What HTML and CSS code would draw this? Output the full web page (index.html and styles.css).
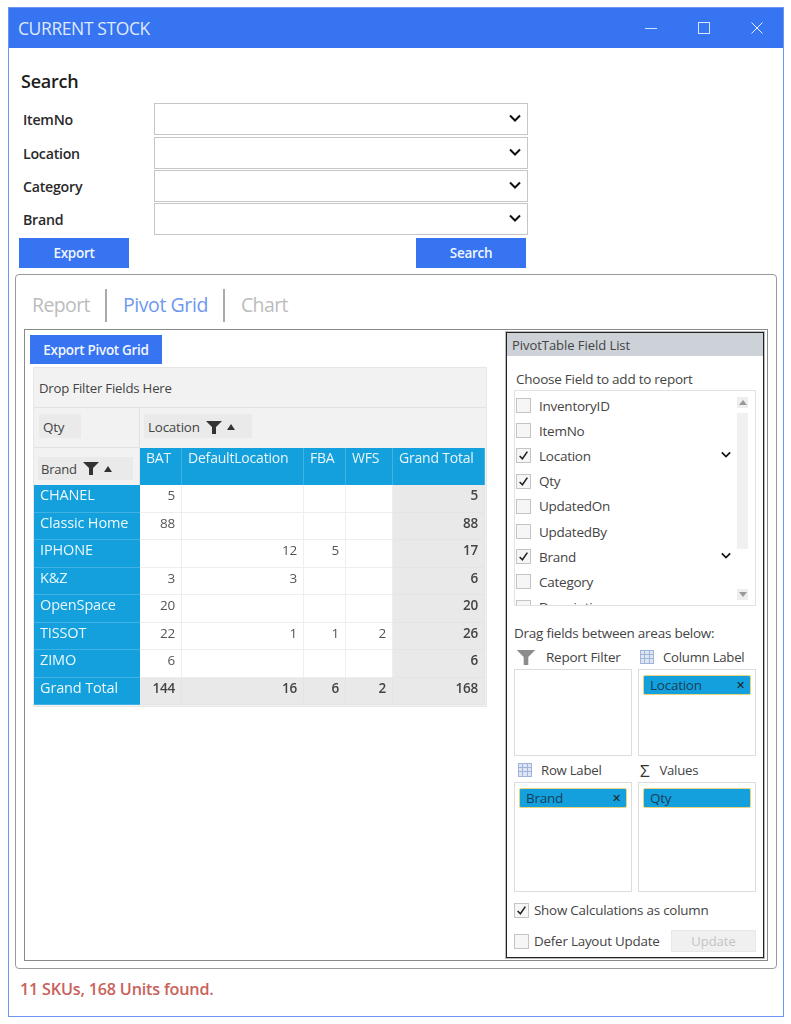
FILE: index.html
```html
<!DOCTYPE html>
<html lang="en">
<head>
<meta charset="utf-8">
<title>Current Stock</title>
<link rel="stylesheet" href="styles.css">
</head>
<body>
<svg width="0" height="0" class="defs">
  <symbol id="chev" viewBox="0 0 12 8"><path d="M1 1.5 6 6.5 11 1.5" fill="none" stroke="#111" stroke-width="2"/></symbol>
  <symbol id="funnel" viewBox="0 0 16 13"><path d="M0 0H16L10 6V13H6V6Z" fill="#333"/></symbol>
  <symbol id="tick" viewBox="0 0 10 10"><path d="M1.5 5.5 4 8 8.5 1.5" fill="none" stroke="#222" stroke-width="1.4"/></symbol>
  <symbol id="gridicon" viewBox="0 0 14 14"><rect width="14" height="14" fill="#dfe6f2"/><path d="M0 .5H14M0 4.5H14M0 8.5H14M0 13.5H14M.5 0V14M4.5 0V14M9.5 0V14M13.5 0V14" stroke="#9db4dc"/></symbol>
</svg>
<div class="window">
  <header class="titlebar">
    <span class="title">CURRENT STOCK</span>
    <div class="winctl">
      <svg width="12" height="12" viewBox="0 0 12 12"><path d="M0 6.5H12" stroke="#cfe0fb"/></svg>
      <svg width="12" height="12" viewBox="0 0 12 12"><rect x=".5" y=".5" width="11" height="11" fill="none" stroke="#dbe7fc"/></svg>
      <svg width="12" height="12" viewBox="0 0 12 12"><path d="M.5 .5 11.5 11.5M11.5 .5 .5 11.5" stroke="#e6effd"/></svg>
    </div>
  </header>

  <section class="search">
    <h2>Search</h2>
    <div class="form">
      <label>ItemNo</label><div class="combo"><svg class="chev"><use href="#chev"/></svg></div>
      <label>Location</label><div class="combo"><svg class="chev"><use href="#chev"/></svg></div>
      <label>Category</label><div class="combo"><svg class="chev"><use href="#chev"/></svg></div>
      <label>Brand</label><div class="combo"><svg class="chev"><use href="#chev"/></svg></div>
    </div>
    <div class="actions">
      <button class="btn">Export</button>
      <button class="btn">Search</button>
    </div>
  </section>

  <section class="tabpanel">
    <nav class="tabs">
      <span class="tab">Report</span>
      <span class="tab active">Pivot Grid</span>
      <span class="tab">Chart</span>
    </nav>
    <div class="workspace">
      <div class="gridside">
        <button class="btn pivotbtn">Export Pivot Grid</button>
        <div class="pivot">
          <div class="dropzone">Drop Filter Fields Here</div>
          <div class="pt">
            <div class="c zone"><span class="chip">Qty</span></div>
            <div class="c zone span5"><span class="chip loc">Location <svg class="fn"><use href="#funnel"/></svg><i class="up"></i></span></div>
            <div class="c zone brandzone"><span class="chip brandchip">Brand <svg class="fn"><use href="#funnel"/></svg><i class="up"></i></span></div>
            <div class="c ch">BAT</div><div class="c ch">DefaultLocation</div><div class="c ch">FBA</div><div class="c ch">WFS</div><div class="c ch">Grand Total</div>

            <div class="c rh">CHANEL</div><div class="c v">5</div><div class="c v"></div><div class="c v"></div><div class="c v"></div><div class="c v t">5</div>
            <div class="c rh">Classic Home</div><div class="c v">88</div><div class="c v"></div><div class="c v"></div><div class="c v"></div><div class="c v t">88</div>
            <div class="c rh">IPHONE</div><div class="c v"></div><div class="c v">12</div><div class="c v">5</div><div class="c v"></div><div class="c v t">17</div>
            <div class="c rh">K&amp;Z</div><div class="c v">3</div><div class="c v">3</div><div class="c v"></div><div class="c v"></div><div class="c v t">6</div>
            <div class="c rh">OpenSpace</div><div class="c v">20</div><div class="c v"></div><div class="c v"></div><div class="c v"></div><div class="c v t">20</div>
            <div class="c rh">TISSOT</div><div class="c v">22</div><div class="c v">1</div><div class="c v">1</div><div class="c v">2</div><div class="c v t">26</div>
            <div class="c rh">ZIMO</div><div class="c v">6</div><div class="c v"></div><div class="c v"></div><div class="c v"></div><div class="c v t">6</div>
            <div class="c rh">Grand Total</div><div class="c v t">144</div><div class="c v t">16</div><div class="c v t">6</div><div class="c v t">2</div><div class="c v t">168</div>
          </div>
        </div>
      </div>

      <aside class="fieldlist">
        <div class="flhead">PivotTable Field List</div>
        <div class="flbody">
          <p class="choose">Choose Field to add to report</p>
          <div class="fields">
            <ul class="items">
              <li><span class="cb"></span>InventoryID</li>
              <li><span class="cb"></span>ItemNo</li>
              <li><span class="cb"><svg><use href="#tick"/></svg></span>Location<svg class="chev small"><use href="#chev"/></svg></li>
              <li><span class="cb"><svg><use href="#tick"/></svg></span>Qty</li>
              <li><span class="cb"></span>UpdatedOn</li>
              <li><span class="cb"></span>UpdatedBy</li>
              <li><span class="cb"><svg><use href="#tick"/></svg></span>Brand<svg class="chev small"><use href="#chev"/></svg></li>
              <li><span class="cb"></span>Category</li>
              <li><span class="cb"></span>Description</li>
            </ul>
            <div class="scroll">
              <span class="sbtn"><i class="up g"></i></span>
              <span class="track"></span>
              <span class="sbtn"><i class="down g"></i></span>
            </div>
          </div>
          <p class="drag">Drag fields between areas below:</p>
          <div class="areas">
            <div class="area">
              <div class="ah first"><svg width="22" height="15" viewBox="0 0 16 13"><path d="M0 0H16L10 6V13H6V6Z" fill="#8c8c8c"/></svg>Report Filter</div>
              <div class="abox tall1"></div>
            </div>
            <div class="area">
              <div class="ah"><svg width="14" height="14"><use href="#gridicon"/></svg>Column Label</div>
              <div class="abox tall1"><div class="pill">Location<span class="x">✕</span></div></div>
            </div>
            <div class="area">
              <div class="ah left"><svg width="14" height="14"><use href="#gridicon"/></svg>Row Label</div>
              <div class="abox tall2"><div class="pill">Brand<span class="x">✕</span></div></div>
            </div>
            <div class="area">
              <div class="ah sigma"><b>Σ</b>Values</div>
              <div class="abox tall2"><div class="pill">Qty</div></div>
            </div>
          </div>
          <div class="opt"><span class="cb"><svg><use href="#tick"/></svg></span>Show Calculations as column</div>
          <div class="opt last"><span class="cb"></span>Defer Layout Update<button class="update">Update</button></div>
        </div>
      </aside>
    </div>
  </section>

  <p class="status">11 SKUs, 168 Units found.</p>
</div>
</body>
</html>
```
FILE: styles.css
```css
* { box-sizing: border-box; }
html, body { margin: 0; padding: 0; background: #fff; }
body { padding: 7px 7px 0 8px; font-family: "Open Sans", "Noto Sans", sans-serif; color: #444; }
.defs { position: absolute; }
.window { width: 776px; height: 1010px; border: 1px solid #6c97ef; display: flex; flex-direction: column; }
.titlebar { height: 40px; flex: none; background: #3674f2; display: flex; align-items: center; justify-content: space-between; padding: 0 20px 0 9px; }
.title { color: #dfe9fc; font-size: 17.5px; letter-spacing: -.4px; }
.winctl { display: flex; gap: 41px; }
.search { padding: 20px 0 0 10px; height: 226px; flex: none; }
.search h2 { margin: 0 0 0 2px; font-size: 18px; line-height: 26px; font-weight: 600; color: #1c1c1c; letter-spacing: -.25px; }
.form { display: grid; grid-template-columns: 135px 374px; grid-template-rows: 33px 32px 32px 32px; row-gap: 1px; margin-top: 9px; }
.form label { padding: 1px 0 0 4px; font-size: 14.2px; font-weight: 600; color: #2a2a2a; line-height: 32px; letter-spacing: -.25px; }
.combo { height: 32px; border: 1px solid #c6c6c6; display: flex; align-items: center; justify-content: flex-end; padding: 0 6px 3px 0; }
.chev { width: 12px; height: 8px; }
.actions { width: 507px; display: flex; justify-content: space-between; margin-top: 3px; }
.btn { width: 110px; height: 30px; background: #3674f2; color: #f2f6fe; border: 0; padding: 0; font: 600 13.5px "Open Sans", sans-serif; letter-spacing: -.3px; }
.tabpanel { margin: 0 6px 0 6px; height: 695px; flex: none; border: 1px solid #999; border-radius: 4px; padding: 0 8px 7px 8px; display: flex; flex-direction: column; }
.tabs { display: flex; height: 54px; flex: none; padding: 14px 0 7px 8px; }
.tab { font-size: 19.5px; line-height: 32px; color: #bcbcbc; padding-right: 15px; margin-right: 16px; border-right: 2px solid #aaa; letter-spacing: -.6px; }
.tab:last-child { border: 0; }
.tab.active { color: #6e98ee; letter-spacing: -.42px; }
.workspace { flex: 1; border: 1px solid #8a8a8a; display: flex; justify-content: space-between; padding: 2px 3px 1px 5px; }
.gridside { padding-top: 3px; width: 458px; }
.pivotbtn { display: block; width: 132px; height: 29px; }
.pivot { margin: 3px 0 0 3px; width: 454px; background: #f2f2f2; border: 1px solid #e6e6e6; padding-bottom: 1px; }
.dropzone { height: 40px; padding-left: 5px; font-size: 13.2px; line-height: 41px; color: #444; border-bottom: 1px solid #e2e2e2; letter-spacing: -.2px; }
.pt { display: grid; grid-template-columns: 106px 42px 122px 42px 47px 92px; grid-template-rows: 40px 37px repeat(8, 27.5px); opacity: .999; }
.c { font-size: 14px; letter-spacing: -.2px; line-height: 20px; }
.zone { padding: 6px 0 0 5px; }
.zone:first-child { border-right: 1px solid #e2e2e2; border-bottom: 1px solid #e2e2e2; }
.span5 { grid-column: span 5; padding-left: 4px; }
.chip { display: inline-flex; align-items: center; background: #eaeaea; height: 24px; padding: 2px 4px 0; font-size: 13.4px; }
.zone:first-child .chip { width: 42px; }
.loc { width: 108px; gap: 3px; }
.brandzone { padding: 9px 0 0 4px; grid-column: 1; border-right: 1px solid #e2e2e2; }
.brandchip { width: 95px; height: 23px; gap: 3px; padding: 0 3px; font-size: 13px; }
.fn { width: 16px; height: 13px; margin-left: 3px; }
.up { width: 0; height: 0; margin-left: 2px; border-left: 4px solid transparent; border-right: 4px solid transparent; border-bottom: 6px solid #333; }
.down { width: 0; height: 0; border-left: 4px solid transparent; border-right: 4px solid transparent; border-top: 5px solid #999; }
.up.g { border-bottom: 5px solid #999; margin: 0; }
.ch { background: #13a0dc; color: #e9f6fc; padding: 0 0 0 6px; border-right: 1px solid #3fb1e2; }
.rh { background: #13a0dc; color: #eaf7fd; padding: 0 0 0 6px; border-bottom: 1px solid #3fb1e2; font-size: 14.5px; letter-spacing: -.15px; }
.v { background: #fff; text-align: right; padding: 0 6px 0 0; border-right: 1px solid #eee; border-bottom: 1px solid #eee; color: #555; font-size: 13.5px; }
.t { background: #e9e9e9; font-weight: 600; color: #444; border-color: #e4e4e4; }
.fieldlist { width: 258px; height: 626px; border: 1px solid #222; box-shadow: 0 0 0 1px #bbb; background: #fff; display: flex; flex-direction: column; }
.flhead { height: 23px; flex: none; background: #cdd1d8; font-size: 13px; line-height: 25px; padding-left: 5px; color: #444; letter-spacing: -.05px; }
.flbody { padding: 0 7px; flex: 1; display: flex; flex-direction: column; }
.choose { margin: 14px 0 0 2px; font-size: 13.5px; line-height: 18px; letter-spacing: -.25px; }
.fields { height: 216px; margin-top: 2px; border: 1px solid #e2e2e2; display: flex; flex: none; overflow: hidden; }
.items { list-style: none; margin: 0; padding: 2px 0 0 1px; flex: 1; height: 214px; overflow: hidden; }
.items li { height: 25.2px; display: flex; align-items: center; font-size: 13.5px; letter-spacing: -.25px; }
.cb { width: 15px; height: 15px; flex: none; border: 1px solid #c4c4c4; background: #f6f6f6; margin-right: 8px; display: flex; align-items: center; justify-content: center; }
.cb svg { width: 11px; height: 11px; }
.chev.small { margin-left: auto; margin-right: 0; margin-bottom: 3px; width: 10px; height: 7px; }
.scroll { width: 11px; margin: 6px 7px 0 6px; display: flex; flex-direction: column; gap: 5px; }
.sbtn { height: 11px; flex: none; background: #eee; display: flex; align-items: center; justify-content: center; }
.track { height: 136px; flex: none; background: #f0f0f0; margin-bottom: 35px; }
.drag { margin: 18px 0 0; font-size: 13.5px; line-height: 18px; letter-spacing: -.25px; }
.areas { display: grid; grid-template-columns: 118px 118px; column-gap: 6px; margin-top: 3px; }
.ah { height: 24px; display: flex; align-items: center; gap: 9px; font-size: 13.2px; letter-spacing: -.25px; padding-left: 2px; }
.left { padding-left: 4px; }
.first { gap: 9px; padding-left: 0; font-size: 13.5px; }
.first svg { margin-left: 1px; }
.sigma { gap: 10px; }
.sigma b { font-size: 17px; font-weight: 400; color: #333; }
.abox { border: 1px solid #dcdcdc; padding: 5px 4px; margin-bottom: 2px; }
.tall1 { height: 87px; }
.tall2 { height: 110px; }
.pill { height: 20px; background: #13a0dc; border: 1px solid #e8d27a; border-radius: 2px; color: #16405a; font-size: 13.5px; line-height: 18px; padding: 0 6px; display: flex; justify-content: space-between; letter-spacing: -.25px; }
.x { font-size: 11px; color: #222; margin-right: -1px; }
.opt { display: flex; align-items: center; font-size: 13.4px; letter-spacing: -.22px; height: 20px; margin-top: 6px; }
.opt .cb { margin-right: 5px; }
.opt.last { margin-top: 11px; }
.opt.last .update { margin-left: auto; }
.update { width: 85px; height: 22px; background: #f0f0f0; border: 1px solid #e8e8e8; color: #c4c4c4; font: 13px "Open Sans", sans-serif; padding: 0; }
.status { margin: 9px 0 0 11px; font-size: 16.2px; font-weight: 600; color: #c9615b; line-height: 22px; letter-spacing: -.2px; }
```
